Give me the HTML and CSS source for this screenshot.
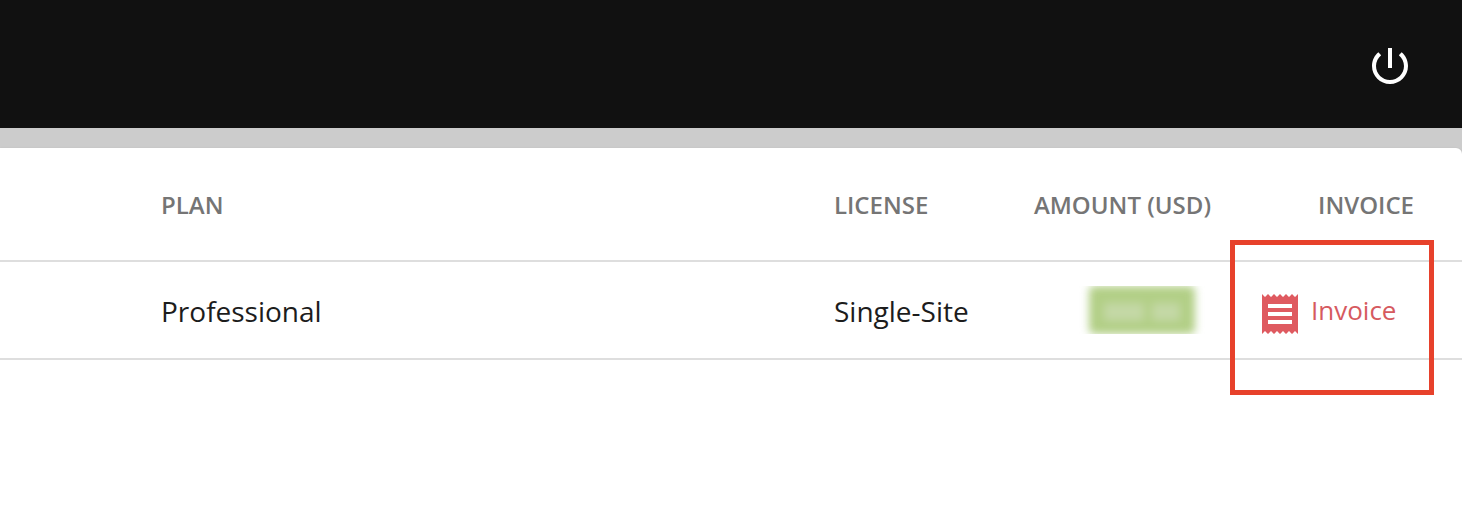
FILE: index.html
```html
<!DOCTYPE html>
<html lang="en">
<head>
<meta charset="utf-8">
<title>Billing</title>
<link rel="stylesheet" href="styles.css">
</head>
<body>
<header class="topbar">
  <svg class="icon" viewBox="0 0 24 24" aria-label="Log out"><path d="M13 3h-2v10h2V3zm4.83 2.17l-1.42 1.42C17.99 7.86 19 9.81 19 12c0 3.87-3.13 7-7 7s-7-3.13-7-7c0-2.19 1.01-4.14 2.58-5.42L6.17 5.17C4.23 6.82 3 9.26 3 12c0 4.97 4.03 9 9 9s9-4.03 9-9c0-2.74-1.23-5.18-3.17-6.83z"/></svg>
</header>
<main class="card">
  <div class="row head">
    <span>PLAN</span>
    <span>LICENSE</span>
    <span class="right">AMOUNT (USD)</span>
    <span class="right">INVOICE</span>
  </div>
  <div class="row item">
    <span>Professional</span>
    <span>Single-Site</span>
    <span class="amount"><span class="blur-box"><span class="chip"><span class="chip-part"></span><span class="chip-part short"></span></span></span></span>
    <a class="invoice">
      <svg class="icon" viewBox="0 0 24 24"><path d="M18 17H6v-2h12v2zm0-4H6v-2h12v2zm0-4H6V7h12v2zM3 22l1.5-1.5L6 22l1.5-1.5L9 22l1.5-1.5L12 22l1.5-1.5L15 22l1.5-1.5L18 22l1.5-1.5L21 22V2l-1.5 1.5L18 2l-1.5 1.5L15 2l-1.5 1.5L12 2l-1.5 1.5L9 2 7.500 3.500 6 2 4.500 3.500 3 2v20z"/></svg>
      <span class="invoice-label">Invoice</span>
    </a>
  </div>
</main>
<div class="highlight"></div>
</body>
</html>
```
FILE: styles.css
```css
* { box-sizing: border-box; }
body {
  margin: 0;
  height: 532px;
  overflow: hidden;
  display: flex;
  flex-direction: column;
  background: #cccccc;
  font-family: "Open Sans", sans-serif;
  font-size: 28px;
  color: #1c1c1c;
}
.icon { width: 48px; height: 48px; flex: none; fill: currentColor; }
.topbar {
  height: 128px;
  padding: 42px 48px 0 0;
  display: flex;
  justify-content: flex-end;
  background: #111;
  color: #fff;
}
.card {
  flex: 1;
  margin-top: 20px;
  background: #fff;
  border-top-right-radius: 6px;
  box-shadow: 0 0 2px rgba(0, 0, 0, .08);
}
.row {
  display: grid;
  grid-template-columns: 673px 180px 197px 203px;
  padding-left: 161px;
  align-items: center;
  border-bottom: 2px solid #dedede;
  white-space: nowrap;
}
.head {
  height: 114px;
  font-size: 24px;
  font-weight: 600;
  color: #757575;
}
.right { text-align: right; }
.item { height: 98px; padding-top: 2px; }
.amount { display: flex; justify-content: flex-end; padding: 0 3px 2px 0; }
.blur-box {
  width: 132px;
  height: 48px;
  overflow: hidden;
  display: flex;
  justify-content: center;
}
.chip {
  width: 106px;
  height: 48px;
  padding-top: 4px;
  display: flex;
  align-items: center;
  justify-content: center;
  gap: 8px;
  background: #b2cf86;
  border-radius: 5px;
  filter: blur(4.500px);
}
.chip-part { width: 40px; height: 18px; background: #c4d8a6; }
.chip-part.short { width: 28px; }
.invoice {
  display: flex;
  align-items: flex-start;
  padding: 6px 0 0 45px;
  color: #df5a60;
}
.invoice-label { margin-left: 7px; font-size: 26px; line-height: 40px; color: #d65a5f; }
.highlight {
  position: absolute;
  left: 1230px;
  top: 240px;
  width: 204px;
  height: 155px;
  border: 5px solid #e7412b;
}
```
